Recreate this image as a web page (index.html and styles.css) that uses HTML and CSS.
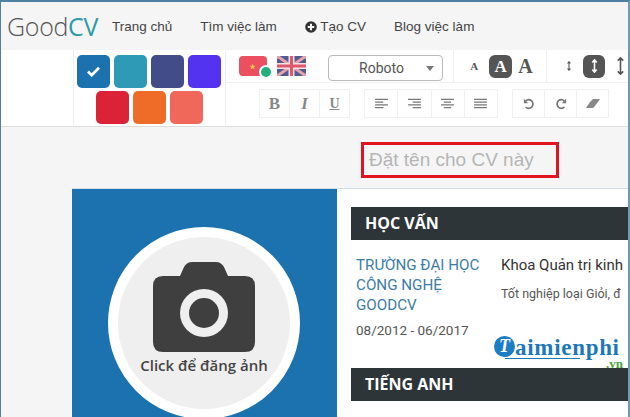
FILE: index.html
```html
<!DOCTYPE html>
<html lang="en">
<head>
    <meta charset="UTF-8">
    <title>GoodCV</title>
    <link rel="stylesheet" href="styles.css">
</head>
<body>
    <div class="frame">
        <div class="navbar">
            <div class="logo">Good<span class="logo-cv">CV</span></div>
            <div class="nav-link nav-home">Trang chủ</div>
            <div class="nav-link nav-jobs">Tìm việc làm</div>
            <div class="nav-link nav-create">
                <svg class="plus-icon" viewBox="0 0 12 12" width="12" height="12"><circle cx="6" cy="6" r="5.800" fill="#333"/><path d="M6 2.800v6.400M2.800 6h6.400" stroke="#f5f5f5" stroke-width="2"/></svg>
                Tạo CV
            </div>
            <div class="nav-link">Blog việc làm</div>
        </div>

        <div class="toolbar">
            <div class="colors">
                <div class="color-row">
                    <div class="swatch c-blue">
                        <svg viewBox="0 0 16 12" width="15" height="11"><path d="M2 6l4 4 8-8" fill="none" stroke="#fff" stroke-width="3"/></svg>
                    </div>
                    <div class="swatch c-teal"></div>
                    <div class="swatch c-navy"></div>
                    <div class="swatch c-violet"></div>
                </div>
                <div class="color-row">
                    <div class="swatch c-red"></div>
                    <div class="swatch c-orange"></div>
                    <div class="swatch c-salmon"></div>
                </div>
            </div>

            <div class="tools">
                <div class="tools-top">
                    <div class="langs">
                        <div class="flag flag-vn">
                            <svg class="vn-star" viewBox="0 0 10 10" width="7" height="7"><path d="M5 1l1.200 2.800 3 .2-2.300 2 .8 3L5 7.400 2.300 9l.8-3L.8 4l3-.2z" fill="#f2c14e"/></svg>
                            <span class="lang-dot"></span>
                        </div>
                        <svg class="flag-uk" viewBox="0 0 29 20" width="29" height="20">
                            <rect width="29" height="20" rx="4" fill="#525a92"/>
                            <path d="M0 0l29 20M29 0L0 20" stroke="#e9a3ad" stroke-width="3"/>
                            <path d="M14.500 0v20M0 10h29" stroke="#f3e4e6" stroke-width="6"/>
                            <path d="M14.500 0v20M0 10h29" stroke="#e0566b" stroke-width="3"/>
                        </svg>
                    </div>
                    <div class="font-select">
                        <span class="font-name">Roboto</span>
                        <span class="caret"></span>
                    </div>
                    <div class="sizes">
                        <span class="size size-s">A</span>
                        <span class="size size-m">A</span>
                        <span class="size size-l">A</span>
                    </div>
                    <div class="spacing">
                        <svg viewBox="0 0 8 14" width="6" height="10"><path d="M4 1v12M2 3.500L4 1l2 2.500M2 10.500L4 13l2-2.500" fill="none" stroke="#555" stroke-width="1.500"/></svg>
                        <span class="spacing-on">
                            <svg viewBox="0 0 8 16" width="7" height="14"><path d="M4 1v14M1.500 4L4 1l2.500 3M1.500 12L4 15l2.500-3" fill="none" stroke="#fff" stroke-width="1.800"/></svg>
                        </span>
                        <svg viewBox="0 0 10 20" width="9" height="18"><path d="M5 1v18M2 4l3-3 3 3M2 16l3 3 3-3" fill="none" stroke="#555" stroke-width="1.800"/></svg>
                    </div>
                </div>
                <div class="tools-bottom">
                    <div class="btn-group">
                        <div class="btn btn-b">B</div>
                        <div class="btn btn-i">I</div>
                        <div class="btn btn-u">U</div>
                    </div>
                    <div class="btn-group">
                        <div class="btn btn-wide"><svg viewBox="0 0 14 12" width="13" height="11"><path d="M0 1.500h14M0 4.500h9M0 7.500h14M0 10.500h9" stroke="#777" stroke-width="1.300"/></svg></div>
                        <div class="btn btn-wide"><svg viewBox="0 0 14 12" width="13" height="11"><path d="M0 1.500h14M5 4.500h9M0 7.500h14M5 10.500h9" stroke="#777" stroke-width="1.300"/></svg></div>
                        <div class="btn btn-wide"><svg viewBox="0 0 14 12" width="13" height="11"><path d="M0 1.500h14M3 4.500h8M0 7.500h14M3 10.500h8" stroke="#777" stroke-width="1.300"/></svg></div>
                        <div class="btn btn-wide"><svg viewBox="0 0 14 12" width="13" height="11"><path d="M0 1.500h14M0 4.500h14M0 7.500h14M0 10.500h14" stroke="#777" stroke-width="1.300"/></svg></div>
                    </div>
                    <div class="btn-group">
                        <div class="btn"><svg viewBox="0 0 14 14" width="12" height="12"><path d="M3 3.500A5 5 0 1 1 3 10.500" fill="none" stroke="#777" stroke-width="2"/><path d="M1 1v5h5z" fill="#777"/></svg></div>
                        <div class="btn"><svg viewBox="0 0 14 14" width="12" height="12"><path d="M11 3.500A5 5 0 1 0 11 10.500" fill="none" stroke="#777" stroke-width="2"/><path d="M13 1v5H8z" fill="#777"/></svg></div>
                        <div class="btn"><svg viewBox="0 0 14 10" width="14" height="10"><path d="M4 9L0 9l4-6 3-3h7L9 7 7 9z" fill="#888"/></svg></div>
                    </div>
                </div>
            </div>
        </div>

        <div class="workspace">
            <div class="title-row">
                <div class="cv-title">Đặt tên cho CV này</div>
            </div>
            <div class="cv">
                <div class="cv-side">
                    <div class="avatar">
                        <svg class="camera" viewBox="0 0 102 90" width="102" height="90">
                            <path d="M10 14h17l4-9q3-5 8-5h24q5 0 8 5l4 9h17q10 0 10 10v56q0 10-10 10H10Q0 90 0 80V24q0-10 10-10z" fill="#3f3f3f"/>
                            <circle cx="51" cy="51" r="24" fill="#efefef"/>
                            <circle cx="51" cy="51" r="15" fill="#3f3f3f"/>
                        </svg>
                        <div class="avatar-text">Click để đăng ảnh</div>
                    </div>
                </div>
                <div class="cv-main">
                    <div class="section-bar">HỌC VẤN</div>
                    <div class="edu">
                        <div class="edu-left">
                            <div class="school">TRƯỜNG ĐẠI HỌC CÔNG NGHỆ GOODCV</div>
                            <div class="dates">08/2012 - 06/2017</div>
                        </div>
                        <div class="edu-right">
                            <div class="major">Khoa Quản trị kinh</div>
                            <div class="note">Tốt nghiệp loại Giỏi, đ</div>
                        </div>
                    </div>
                    <div class="section-bar">TIẾNG ANH</div>
                </div>
                <div class="watermark">
                    <div class="wm-line"><span class="wm-badge">T</span><span class="wm-text">aimienphi</span></div>
                    <div class="wm-rule"></div>
                    <div class="wm-vn">.vn</div>
                </div>
            </div>
        </div>
    </div>
</body>
</html>
```

FILE: styles.css
```css
html, body {
    margin: 0;
    height: 417px;
    overflow: hidden;
}
body {
    font-family: "Liberation Sans", Arial, sans-serif;
    background-color: #fff;
    color: #333;
}
.frame {
    height: 417px;
    box-sizing: border-box;
    border-top: 2px solid #4f7fa3;
    border-left: 1px solid #4f7fa3;
    border-right: 2px solid #6f9bb8;
    overflow: hidden;
}

/* navbar */
.navbar {
    height: 48px;
    background-color: #f5f5f5;
    display: flex;
    align-items: center;
    padding-left: 6px;
    font-size: 13.5px;
}
.logo {
    font-family: "Open Sans", sans-serif;
    font-size: 25px;
    font-weight: 300;
    color: #555;
    width: 105px;
    letter-spacing: -0.3px;
}
.logo-cv {
    color: #2f9aa8;
    font-weight: 400;
}
.nav-link {
    color: #444;
    white-space: nowrap;
    margin-right: 28px;
}
.plus-icon {
    vertical-align: -2px;
}

/* toolbar */
.toolbar {
    height: 77px;
    background-color: #fff;
    border-bottom: 1px solid #ddd;
    display: flex;
    padding-left: 72px;
    box-sizing: border-box;
}
.colors {
    width: 153px;
    border-left: 1px solid #eee;
    border-right: 1px solid #eee;
    padding: 5px 1px 0 0;
    box-sizing: border-box;
}
.color-row {
    display: flex;
    justify-content: center;
    gap: 4px;
    margin-bottom: 3px;
}
.swatch {
    width: 33px;
    height: 33px;
    border-radius: 5px;
    display: flex;
    align-items: center;
    justify-content: center;
}
.c-blue { background-color: #1c72ae; }
.c-teal { background-color: #2f9ab5; }
.c-navy { background-color: #414c88; }
.c-violet { background-color: #5433f0; }
.c-red { background-color: #dc2237; }
.c-orange { background-color: #ee6c27; }
.c-salmon { background-color: #f0685a; }

.tools {
    flex: 1;
}
.tools-top {
    height: 33px;
    display: flex;
    align-items: center;
    border-bottom: 1px solid #f0f0f0;
    box-sizing: border-box;
}
.langs {
    width: 102px;
    display: flex;
    align-items: center;
    padding-left: 13px;
    box-sizing: border-box;
    gap: 9px;
}
.flag {
    width: 28px;
    height: 20px;
    border-radius: 4px;
    display: flex;
    align-items: center;
    position: relative;
}
.flag-vn {
    background-color: #ec4f5f;
}
.vn-star {
    margin-left: 10px;
}
.lang-dot {
    position: absolute;
    right: -6px;
    bottom: -3px;
    width: 10px;
    height: 10px;
    background-color: #22b07d;
    border: 2px solid #fff;
    border-radius: 50%;
}
.flag-uk {
    display: block;
    margin-left: 1px;
}
.font-select {
    width: 115px;
    height: 26px;
    margin-top: 4px;
    box-sizing: border-box;
    border: 1px solid #bbb;
    border-radius: 4px;
    display: flex;
    align-items: center;
    justify-content: center;
    position: relative;
    font-family: Roboto, sans-serif;
    font-size: 14px;
    color: #555;
}
.font-name {
    margin-right: 8px;
}
.caret {
    position: absolute;
    right: 8px;
    top: 10px;
    border-top: 5px solid #777;
    border-left: 4px solid transparent;
    border-right: 4px solid transparent;
}
.sizes {
    width: 94px;
    height: 100%;
    margin-left: 10px;
    padding-left: 3px;
    border-left: 1px solid #f0f0f0;
    border-right: 1px solid #f0f0f0;
    display: flex;
    align-items: center;
    justify-content: center;
    font-family: "Liberation Serif", serif;
    font-weight: bold;
    color: #555;
    box-sizing: border-box;
}
.size-s { font-size: 11px; margin-right: 11px; }
.size-m {
    font-size: 17px;
    width: 23px;
    height: 23px;
    line-height: 23px;
    text-align: center;
    background-color: #555;
    color: #fff;
    border-radius: 6px;
    margin-right: 6px;
}
.size-l { font-size: 20px; }
.spacing {
    display: flex;
    align-items: center;
    gap: 11px;
    padding-left: 19px;
}
.spacing-on {
    width: 22px;
    height: 23px;
    background-color: #555;
    border-radius: 6px;
    display: flex;
    align-items: center;
    justify-content: center;
}
.tools-bottom {
    display: flex;
    padding: 6px 0 0 33px;
    gap: 14px;
}
.btn-group {
    display: flex;
    height: 27px;
    border: 1px solid #f0f0f0;
}
.btn {
    width: 31px;
    display: flex;
    align-items: center;
    justify-content: center;
    border-right: 1px solid #f0f0f0;
    color: #888;
    font-family: "Liberation Serif", serif;
    font-size: 17px;
    font-weight: bold;
}
.btn:last-child {
    border-right: none;
}
.btn-wide {
    width: 32.25px;
}
.btn-b, .btn-i, .btn-u {
    width: 29px;
}
.btn-i { font-style: italic; }
.btn-u { text-decoration: underline; font-size: 14px; }

/* work area */
.workspace {
    background-color: #f5f5f5;
    height: 290px;
}
.title-row {
    height: 61px;
    padding-left: 360px;
    box-sizing: border-box;
    padding-top: 15px;
}
.cv-title {
    width: 198px;
    height: 36px;
    line-height: 30px;
    box-sizing: border-box;
    border: 3px solid #e0141c;
    padding-left: 5px;
    font-size: 19px;
    color: #b5b5b5;
    white-space: nowrap;
}
.cv {
    margin-left: 71px;
    display: flex;
    height: 240px;
    background-color: #fff;
    position: relative;
    border-top: 1px solid #cfdde6;
}
.cv-side {
    width: 265px;
    background-color: #1c72ae;
    flex-shrink: 0;
    padding-top: 38px;
    box-sizing: border-box;
}
.avatar {
    width: 172px;
    height: 172px;
    margin-left: 36px;
    border: 10px solid #fff;
    border-radius: 50%;
    background-color: #efefef;
    text-align: center;
}
.camera {
    display: block;
    margin: 25px auto 0;
}
.avatar-text {
    font-family: "Open Sans", sans-serif;
    font-size: 15px;
    font-weight: 600;
    color: #444;
    margin-top: 3px;
}
.cv-main {
    flex: 1;
    padding: 18px 0 0 14px;
    min-width: 0;
}
.section-bar {
    height: 33px;
    line-height: 33px;
    background-color: #2d3539;
    color: #fff;
    font-family: "Open Sans", sans-serif;
    font-weight: bold;
    font-size: 16px;
    padding-left: 14px;
}
.edu {
    display: flex;
    height: 128px;
    padding: 15px 0 0 5px;
    box-sizing: border-box;
    font-family: Roboto, sans-serif;
    white-space: nowrap;
}
.edu-left {
    width: 145px;
    flex-shrink: 0;
}
.school {
    color: #3d7ca6;
    font-size: 15.2px;
    line-height: 20px;
    white-space: normal;
    width: 130px;
}
.dates {
    color: #555;
    font-size: 13.500px;
    margin-top: 7px;
}
.major {
    color: #333;
    font-size: 15px;
    line-height: 20px;
}
.note {
    color: #555;
    font-size: 12.500px;
    margin-top: 11px;
}

/* watermark */
.watermark {
    position: absolute;
    left: 422px;
    top: 147px;
    width: 132px;
    font-family: "Liberation Serif", serif;
}
.wm-line {
    display: flex;
    align-items: center;
    height: 21px;
}
.wm-badge {
    width: 21px;
    height: 21px;
    border-radius: 50%;
    background-color: #1c7cc4;
    color: #fff;
    font-size: 18px;
    font-style: italic;
    font-weight: bold;
    text-align: center;
    line-height: 21px;
}
.wm-text {
    font-size: 23px;
    font-weight: bold;
    color: #1c78b8;
    line-height: 20px;
    letter-spacing: 0.7px;
    padding-top: 3px;
}
.wm-rule {
    width: 75px;
    height: 1px;
    margin: 1px 0 0 11px;
    background-color: #1c78b8;
}
.wm-vn {
    font-size: 13px;
    font-weight: bold;
    color: #4aa63c;
    text-align: right;
    line-height: 10px;
    padding-right: 3px;
}
```
